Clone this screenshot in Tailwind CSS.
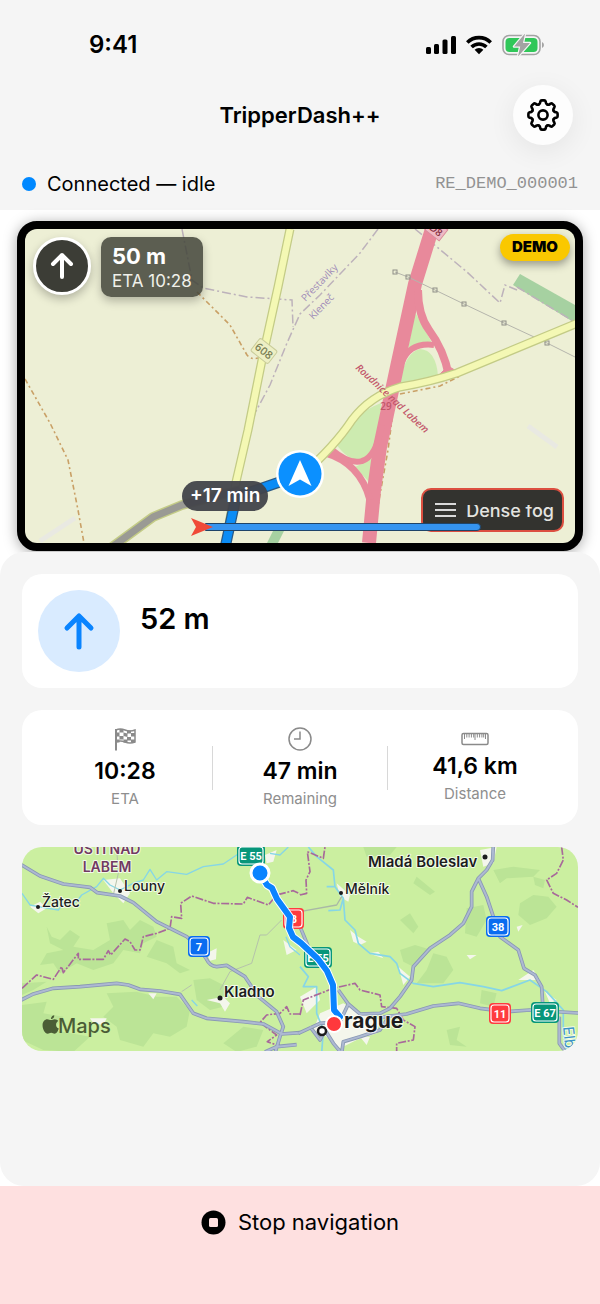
<!DOCTYPE html>
<html lang="en">
<head>
  <meta charset="UTF-8">
  <title>TripperDash++</title>
  <meta name="viewport" content="width=device-width, initial-scale=1.0">
  <script src="https://cdn.jsdelivr.net/npm/@tailwindcss/browser@4"></script>
</head>
<body class="min-h-screen flex flex-col bg-white text-black font-['Inter',sans-serif]">

  <header class="bg-[#f5f5f5]">
    <!-- status bar -->
    <div class="h-[85px] pt-1 pl-[89px] pr-[55px] flex items-center justify-between">
      <span class="text-2xl font-semibold">9:41</span>
      <div class="flex items-center gap-[10px]">
        <svg width="30" height="20" viewBox="0 0 30 20">
          <rect x="0" y="12" width="5" height="7" rx="1.5"/>
          <rect x="8" y="9" width="5" height="10" rx="1.5"/>
          <rect x="16.500" y="4.500" width="5" height="14.500" rx="1.500"/>
          <rect x="25" y="1" width="5" height="18" rx="1.500"/>
        </svg>
        <svg width="26" height="20" viewBox="0 0 26 20">
          <g fill="none" stroke="#000" stroke-width="3.600">
            <path d="M1.300 7.500A16.500 16.500 0 0 1 24.700 7.500"/>
            <path d="M5.600 12A10.500 10.500 0 0 1 20.400 12"/>
          </g>
          <path d="M8.600 14.800A6.300 6.300 0 0 1 17.400 14.800L13 19.300Z"/>
        </svg>
        <svg width="43" height="22" viewBox="0 0 43 22">
          <rect x="1" y="1.500" width="37" height="19" rx="6" fill="none" stroke="#a3a3a3" stroke-width="1.600"/>
          <rect x="3.500" y="4" width="32" height="14" rx="4" fill="#30c759"/>
          <path d="M40 8v6q2-1 2-3t-2-3z" fill="#a3a3a3"/>
          <path d="M23 -0.500L12 12.500H18.200L16 22.500L28 9H21Z" fill="#a3a3a3" stroke="#f5f5f5" stroke-width="2.400" stroke-linejoin="round" paint-order="stroke"/>
        </svg>
      </div>
    </div>

    <!-- title bar -->
    <div class="grid grid-cols-[60px_1fr_60px] items-center px-[27px]">
      <span></span>
      <h1 class="text-center text-[22px] font-semibold">TripperDash++</h1>
      <button type="button" aria-label="Settings" class="size-15 rounded-full bg-[#fdfdfd] flex items-center justify-center shadow-[0_6px_28px_rgba(0,0,0,0.07)]">
        <svg width="34" height="34" viewBox="-17 -17 34 34" fill="none" stroke="#000" stroke-width="2.600" stroke-linecap="round" stroke-linejoin="round">
          <path id="tooth" d="M-4.360 -10.530Q-3.100 -11.100 -2.900 -12.200L-2.700 -13.400Q-2.400 -14.600 -1.200 -14.600H1.200Q2.400 -14.600 2.700 -13.400L2.900 -12.200Q3.100 -11.100 4.360 -10.530"/>
          <use href="#tooth" transform="rotate(45)"/>
          <use href="#tooth" transform="rotate(90)"/>
          <use href="#tooth" transform="rotate(135)"/>
          <use href="#tooth" transform="rotate(180)"/>
          <use href="#tooth" transform="rotate(225)"/>
          <use href="#tooth" transform="rotate(270)"/>
          <use href="#tooth" transform="rotate(315)"/>
          <circle r="4.600"/>
        </svg>
      </button>
    </div>

    <!-- connection -->
    <div class="mt-3 h-[53px] px-[22px] flex items-center justify-between">
      <div class="flex items-center gap-[11px]">
        <span class="size-[14px] rounded-full bg-[#0088ff]"></span>
        <span class="text-[20px]">Connected — idle</span>
      </div>
      <span class="text-[17px] text-[#929292] font-['Liberation_Mono',monospace]">RE_DEMO_000001</span>
    </div>
  </header>

  <!-- dash preview -->
  <section class="px-[17px] pt-[11px] pb-px">
    <div class="relative h-[330px] rounded-[20px] border-8 border-black bg-black shadow-[0_2px_14px_rgba(0,0,0,0.35)]">
      <svg class="w-full h-full rounded-[12px]" viewBox="25 229 550 314" preserveAspectRatio="xMidYMid slice">
        <rect x="-300" y="0" width="1200" height="800" fill="#edefd5"/>
        <!-- meadows and woods -->
        <g fill="#cdebb0">
          <path d="M415 312L432 343Q415 342 407 354Z"/>
          <path d="M399 385Q405 352 420 349Q436 350 438 376Z"/>
          <path d="M336 444Q350 415 381 403Q380 445 367 458Q352 466 336 444Z"/>
          <path d="M355 467L373 458L369 482Z"/>
        </g>
        <path d="M520 274L575 305V323L513 285Z" fill="#a6d1a1"/>
        <path d="M273 531L284 531L278 543H267Z" fill="#a6d1a1"/>
        <path d="M528 426L557 447M40 541L75 518" stroke="#e9e9e2" stroke-width="5" fill="none"/>
        <!-- borders and tracks -->
        <g fill="none" stroke="#bdb2bb" stroke-width="1.500" stroke-dasharray="9 3 2 3">
          <path d="M378 229L360 253L320 295L300 314L287 343L270 385L255 413L240 477"/>
          <path d="M182 229L192 280L203 288L247 297L292 300L293 327"/>
          <path d="M415 229L437 247L467 272L500 303L505 285L517 290"/>
          <path d="M517 287L573 321"/>
        </g>
        <g fill="none" stroke="#c9a066" stroke-width="1.600" stroke-dasharray="5 3 2 3">
          <path d="M197 292L230 325L247 355Q251 360 258 358"/>
          <path d="M25 379L50 423L68 460L78 510L84 543"/>
          <path d="M400 394L440 386L460 376"/>
          <path d="M394 404L388 450L379 500L374 543"/>
        </g>
        <!-- motorway -->
        <g fill="none" stroke="#e8899b">
          <path d="M432 229L415 284L397 367L390 400L380 447L374 490L369 543" stroke-width="14"/>
          <path d="M418 290Q418 315 429 330Q444 350 449 376" stroke-width="8"/>
          <path d="M402 362Q410 342 434 345" stroke-width="6"/>
          <path d="M325 453Q360 463 370 500" stroke-width="7"/>
          <path d="M331 449Q350 465 362 461Q376 457 382 425" stroke-width="6"/>
          <path d="M436 378L448 366L458 372Z" fill="#e8899b"/>
        </g>
        <!-- power line -->
        <path d="M395 272L408 277L435 290L464 304L504 323L547 343L575 357" fill="none" stroke="#b5b5ac" stroke-width="1"/>
        <g fill="none" stroke="#8f8f88" stroke-width="1">
          <rect x="393" y="270" width="4" height="4"/>
          <rect x="406" y="275" width="4" height="4"/>
          <rect x="433" y="288" width="4" height="4"/>
          <rect x="462" y="302" width="4" height="4"/>
          <rect x="502" y="321" width="4" height="4"/>
          <rect x="545" y="341" width="4" height="4"/>
        </g>
        <!-- main roads -->
        <g fill="none" stroke-linejoin="round">
          <g stroke="#c3cb86" stroke-width="9">
            <path id="road608" d="M290 229L278 287L262 360L248 430L236 482L226 543"/>
            <path id="roadEast" d="M580 322L457 373Q430 382 400 387Q370 396 352 420Q335 446 300 477"/>
          </g>
          <g stroke="#f4f8b4" stroke-width="6.500">
            <use href="#road608"/>
            <use href="#roadEast"/>
          </g>
          <path d="M112 547L153 517L182 505L240 490" stroke="#c3cb86" stroke-width="10"/>
          <path d="M112 547L153 517L182 505L240 490" stroke="#9a9a94" stroke-width="7"/>
          <path d="M300 475L236 497L225 548" stroke="#2a5a86" stroke-width="11"/>
          <path d="M300 475L236 497L225 548" stroke="#0b8cf5" stroke-width="8.500"/>
        </g>
        <!-- labels -->
        <g font-family="Open Sans, sans-serif" text-anchor="middle">
          <g transform="translate(264 351) rotate(38)">
            <rect x="-11" y="-8" width="22" height="16" rx="2" fill="#edefc4" stroke="#c9cc9a"/>
            <text y="4" font-size="11" font-weight="600" fill="#7b7f55">608</text>
          </g>
          <text transform="translate(322 285) rotate(-46)" font-size="10" fill="#a08bb8">Přestavlky</text>
          <text transform="translate(324 309) rotate(-46)" font-size="10" fill="#a08bb8">Kleneč</text>
          <text transform="translate(390 401) rotate(43)" font-size="10" font-style="italic" font-weight="600" fill="#c2576a">Roudnice nad Labem</text>
          <text x="386" y="410" font-size="10" font-weight="600" fill="#c2576a">29</text>
          <g transform="translate(437 229) rotate(38)">
            <rect x="-9" y="-6" width="18" height="14" fill="#efb9c4" stroke="#d98b9b"/>
            <text y="5" font-size="10" font-weight="600" fill="#8a3346">D8</text>
          </g>
        </g>
      </svg>

      <div class="absolute top-2 left-2 flex items-start gap-[10px]">
        <div class="size-[58px] rounded-full border-[3px] border-white bg-[#3c3d36] flex items-center justify-center shadow-[0_4px_10px_rgba(0,0,0,0.25)]">
          <svg width="24" height="28" viewBox="0 0 24 28" fill="none" stroke="#fff" stroke-width="4" stroke-linecap="round" stroke-linejoin="round"><path d="M12 25V3M3 12L12 3L21 12"/></svg>
        </div>
        <div class="h-[60px] px-[11px] pt-1 rounded-[10px] bg-[#42443a]/85 text-white shadow-[0_4px_10px_rgba(0,0,0,0.25)]">
          <p class="text-[22px] leading-[30px] font-bold">50 m</p>
          <p class="text-[17px] leading-[20px] text-[#f0f0ea]">ETA 10:28</p>
        </div>
      </div>

      <span class="absolute top-[5px] right-[5px] h-[27px] px-3 rounded-full bg-[#fac800] flex items-center text-[15px] font-black shadow-[0_4px_8px_rgba(0,0,0,0.35)]">DEMO</span>

      <div class="absolute bottom-[45px] left-1/2 -translate-x-1/2">
        <svg width="48" height="48" viewBox="-24 -24 48 48">
          <circle r="24" fill="#fff"/>
          <circle r="21.500" fill="#0b90ff"/>
          <path d="M0 -14L11.500 12L0 5.500L-11.500 12Z" fill="#fff"/>
        </svg>
      </div>

      <span class="absolute bottom-8 left-[157px] h-[30px] px-2 rounded-full bg-[#42434a]/95 text-white flex items-center text-[19px] font-semibold">+17 min</span>

      <div class="absolute bottom-[11px] right-[11px] h-[44px] px-2 pl-3 rounded-[10px] border-2 border-[#dc4f40] bg-[#33332f] flex items-center gap-[10px] text-[#e4e4e0]">
        <svg width="21" height="14" viewBox="0 0 21 14" stroke="#dadada" stroke-width="2"><path d="M0 1H21M0 7H21M0 13H21"/></svg>
        <span class="text-[18px] font-medium">Dense fog</span>
        <span class="absolute top-[11px] right-2 h-1 w-[90px] bg-[#33332f]"></span>
      </div>

      <div class="absolute bottom-[7px] left-[166px] right-[94px] flex items-center">
        <div class="ml-[14px] my-[5px] flex-1 h-2 rounded-r-full border border-[#1f4468] bg-[#3594f0]"></div>
        <svg class="absolute left-0" width="22" height="18" viewBox="0 0 22 18"><path d="M0 0L22 9L0 18L5 9Z" fill="#f04a38"/></svg>
      </div>
    </div>
  </section>

  <main class="relative flex-1 bg-[#f5f5f5] rounded-[24px] px-[22px] pt-[22px] flex flex-col gap-[22px]">
    <!-- next manoeuvre -->
    <section class="bg-white rounded-[20px] p-4 flex items-center gap-5">
      <div class="size-[82px] rounded-full bg-[#d9ebff] flex items-center justify-center">
        <svg width="32" height="38" viewBox="0 0 32 38" fill="none" stroke="#0a84ff" stroke-width="5" stroke-linecap="round" stroke-linejoin="round"><path d="M16 35V4M4 16L16 4L28 16"/></svg>
      </div>
      <div>
        <p class="text-[29px] leading-[36px] font-semibold">52 m</p>
        <p class="h-6"></p>
      </div>
    </section>

    <!-- trip stats -->
    <section class="bg-white rounded-[20px] h-[115px] px-4 flex items-center text-center">
      <div class="flex-1 flex flex-col items-center">
        <svg width="24" height="24" viewBox="0 0 24 24" fill="none" stroke="#8a8a8a" stroke-width="1.500">
          <path d="M3 23.500V2" stroke-width="2"/>
          <path d="M3 3Q7 1 12 3T22 3V15Q17 17 12 15T3 15Z"/>
          <g fill="#8a8a8a" stroke="none">
            <path d="M6.500 2h4v3.500h-4zM14 3.500h4v3h-4zM10.500 5.500l4 1v3.500l-4-1zM18 6h4v3.500h-4zM3 5.500h3.500v4H3zM6.500 9h4v3.500h-4zM14 10h4v3.500h-4zM10.500 12.500h4v3h-4zM18 12.500h4v3h-4zM3 12.500h3.500v3H3z"/>
          </g>
        </svg>
        <p class="mt-[6px] text-[23px] leading-[28px] font-semibold">10:28</p>
        <p class="mt-1 text-[15px] leading-[20px] text-[#8e8e8e]">ETA</p>
      </div>
      <span class="w-px h-[44px] bg-[#d8d8d8]"></span>
      <div class="flex-1 flex flex-col items-center">
        <svg width="24" height="24" viewBox="0 0 24 24" fill="none" stroke="#8a8a8a" stroke-width="1.500"><circle cx="12" cy="12" r="11"/><path d="M12 4.500V12H6"/></svg>
        <p class="mt-[6px] text-[23px] leading-[28px] font-semibold">47 min</p>
        <p class="mt-1 text-[15px] leading-[20px] text-[#8e8e8e]">Remaining</p>
      </div>
      <span class="w-px h-[44px] bg-[#d8d8d8]"></span>
      <div class="flex-1 flex flex-col items-center">
        <svg width="28" height="14" viewBox="0 0 28 14" fill="none" stroke="#8a8a8a"><rect x="1" y="1.500" width="26" height="11" rx="1.500" stroke-width="1.500"/><path d="M3.500 2v5M5.800 2v3.500M8.100 2v3.500M10.400 2v3.500M12.700 2v3.500M14 2v6M16.300 2v3.500M18.600 2v3.500M20.900 2v3.500M22.700 2v3.500M24.500 2v5"/></svg>
        <p class="mt-[6px] text-[23px] leading-[28px] font-semibold">41,6 km</p>
        <p class="mt-1 text-[15px] leading-[20px] text-[#8e8e8e]">Distance</p>
      </div>
    </section>

    <!-- route overview -->
    <section class="h-[204px] rounded-[20px] overflow-hidden">
      <svg class="w-full h-full" viewBox="0 0 556 204" preserveAspectRatio="xMidYMid slice">
        <rect x="-300" y="-100" width="1200" height="500" fill="#cbefa0"/>
        <!-- west half -->
        <g transform="translate(-12 -7) scale(.3333)" fill="none" stroke-linejoin="round">
          <g fill="#bbe496">
            <path d="M110 260L125 290L150 300L180 270L210 290L190 320L250 330L300 300L290 250L340 240L360 270L390 240L430 260L440 290L400 310L390 340L340 330L310 370L250 390L200 370L150 400L130 370L90 375L110 340L160 330L120 310Z"/>
            <path d="M440 300L490 320L500 370L540 390L510 400L470 370L410 350Z"/>
            <path d="M290 460L380 455L440 470L500 470L540 510L530 560L480 590L430 580L400 620L330 600L320 560L280 530L310 500Z"/>
            <path d="M550 420L600 415L650 440L640 500L600 510L560 480Z"/>
            <path d="M36 495L110 485L100 520L160 530L130 570L240 590L190 636L100 630L36 600Z"/>
            <path d="M640 610L700 560L760 570L740 620L680 636Z"/>
            <path d="M36 430L110 425L70 450L36 465Z"/>
          </g>
          <g fill="#f4f6ec">
            <path d="M60 200L90 185L110 205L85 220Z"/>
            <path d="M280 120L330 115L360 160L340 190L310 160Z"/>
            <path d="M590 340L620 325L618 358L600 362Z"/>
            <path d="M590 480L640 470L660 490L645 515L630 490Z"/>
            <path d="M765 45L800 30L790 65L770 70Z"/>
            <path d="M415 460L440 460L430 478Z"/>
            <path d="M820 300L860 330L830 345Z"/>
            <path d="M240 535L290 535L280 555L250 550Z"/>
          </g>
          <path d="M36 160L60 195L85 200L145 210L160 190L200 185L215 165L260 140L280 115L300 135L330 150L370 130L400 120L420 88L440 120L470 95L530 103L580 80L640 72L680 45L720 30L740 15" stroke="#86d6e6" stroke-width="4"/>
          <path d="M780 40L810 45L835 21M828 290L840 320L870 345M545 480L562 498" stroke="#86d6e6" stroke-width="4"/>
          <path d="M320 25L325 100L310 165M815 240L770 285L750 285L725 370L660 395L630 450M545 435L515 455" stroke="#b5c2ab" stroke-width="3"/>
          <path d="M36 445L80 405L130 418L155 380L160 398L205 340L205 358L280 358L295 332L302 345L345 297L360 305L375 330L390 330L400 290L440 280L480 265L485 230L515 235L512 190L545 168L610 190L700 192L712 172L775 195L800 165L850 152L870 162" stroke="#a8699a" stroke-width="5" stroke-dasharray="24 5 6 5"/>
          <path d="M795 636L800 615L772 605L800 585L750 548L770 525L810 520L830 500L840 522L870 522" stroke="#a8699a" stroke-width="5" stroke-dasharray="24 5 6 5"/>
          <g stroke="#8998b4" stroke-width="11">
            <path id="west" d="M30 72L90 108L160 132L240 142L262 158L330 168L370 188L440 245L530 290L560 315L588 355Q600 380 620 380L650 376L705 410L745 470L800 515L820 560L810 590L795 640M30 482L70 462L130 445L210 440L320 430L355 435L390 448L450 453L510 463L550 520L590 535L700 545L760 552L815 582L870 578M765 636L800 620L860 614"/>
          </g>
          <use href="#west" stroke="#adb9d2" stroke-width="6"/>
        </g>
        <!-- east half -->
        <g transform="translate(278 -7) scale(.3333)" fill="none" stroke-linejoin="round">
          <g fill="#bbe496">
            <path d="M660 190L700 165L745 170L770 200L740 235L690 255L655 225Z"/>
            <path d="M500 205L550 195L560 240L530 290L495 280Z"/>
            <path d="M300 330L345 315L395 330L340 380L310 365Z"/>
            <path d="M380 390L400 340L440 350L460 390L430 430L350 430Z"/>
            <path d="M545 450L590 460L580 500L540 490Z"/>
            <path d="M300 240L330 220L355 260L340 280Z"/>
            <path d="M580 90L640 80L720 90L700 110L620 115L600 130Z"/>
            <path d="M350 110L405 155L390 165L340 130Z"/>
            <path d="M190 21L290 21L270 45L200 50Z"/>
            <path d="M440 570L480 560L470 600L500 620L450 615Z"/>
            <path d="M700 110L735 120L730 145L705 135Z"/>
          </g>
          <g fill="#f4f6ec">
            <path d="M60 520L130 490L180 520L240 540L230 580L170 600L120 625L80 590L40 570Z"/>
            <path d="M110 130L150 165L145 185L120 170Z"/>
            <path d="M150 270L175 290L200 305L180 315L160 305Z"/>
            <path d="M205 340L235 335L250 355Z"/>
            <path d="M295 380L330 410L310 435Z"/>
            <path d="M655 420L700 390L720 420Z"/>
            <path d="M500 345L530 345L510 358Z"/>
            <path d="M540 30L590 21L580 70L550 80Z"/>
            <path d="M650 260L668 255L655 275Z"/>
            <path d="M735 455L770 480L750 490Z"/>
            <path d="M0 470L50 440L60 480L20 520Z"/>
            <path d="M180 590L210 590L200 615Z"/>
          </g>
          <path d="M25 21L50 50L100 90L105 140L80 140M105 140L130 175L120 210L85 212M130 175L135 240L165 270L175 310L210 340L270 350L290 370L300 400L340 430L400 440L480 428L550 440L605 452L690 420L740 455L790 510L790 570L800 636" stroke="#86d6e6" stroke-width="5"/>
          <path d="M0 380L25 410L10 440L50 440L50 520L70 570L65 640" stroke="#86d6e6" stroke-width="5"/>
          <path d="M0 215L110 195L125 170" stroke="#a9b8a6" stroke-width="4"/>
          <path d="M0 525L10 480L100 445L165 430L180 450L240 465L245 500L290 505L310 540L345 560L340 600L290 610L290 640M0 165L20 160L18 120L30 95L22 35L70 55L75 21M785 21L790 60L770 100L740 120L760 160L800 180L834 202" stroke="#a8699a" stroke-width="5" stroke-dasharray="24 5 6 5"/>
          <g stroke="#8998b4" stroke-width="11">
            <path id="east" d="M580 15L578 60L560 90L535 115L515 155L515 200L490 250L450 285L390 325L340 380L335 420L300 470L270 505L240 520L180 522L145 492L115 450M535 115L560 170L600 290L655 330L672 385L705 405L725 440L728 490M240 532L320 522L400 498L475 490L540 505L620 515L690 510L850 520M778 530L778 610L800 640M-5 580L60 550L120 545L145 492M30 560L60 600L75 570L100 610L125 640L130 605L180 590L240 570L260 540M0 260L25 320L30 360"/>
          </g>
          <use href="#east" stroke="#adb9d2" stroke-width="6"/>
        </g>

        <!-- road shields -->
        <g font-family="Roboto, sans-serif" font-size="11" font-weight="700" fill="#fff" text-anchor="middle" stroke-width="1.200">
          <rect x="215" y="-2" width="28" height="21" rx="4" fill="#07967a"/>
          <rect x="217" y="0" width="24" height="17" rx="3" fill="none" stroke="#fff"/>
          <text x="229" y="13">E 55</text>
          <rect x="166" y="89" width="22" height="21" rx="4" fill="#0a6cf0"/>
          <rect x="168" y="91" width="18" height="17" rx="3" fill="none" stroke="#fff"/>
          <text x="177" y="104">7</text>
          <rect x="464" y="69" width="24" height="21" rx="4" fill="#0a6cf0"/>
          <rect x="466" y="71" width="20" height="17" rx="3" fill="none" stroke="#fff"/>
          <text x="476" y="84">38</text>
          <rect x="467" y="156" width="22" height="21" rx="4" fill="#ff3b3f"/>
          <rect x="469" y="158" width="18" height="17" rx="3" fill="none" stroke="#fff"/>
          <text x="478" y="171">11</text>
          <rect x="509" y="155" width="28" height="21" rx="4" fill="#07967a"/>
          <rect x="511" y="157" width="24" height="17" rx="3" fill="none" stroke="#fff"/>
          <text x="523" y="170">E 67</text>
          <rect x="261" y="61" width="21" height="21" rx="4" fill="#ff3b3f"/>
          <rect x="263" y="63" width="17" height="17" rx="3" fill="none" stroke="#fff"/>
          <text x="272" y="76">8</text>
          <rect x="282" y="100" width="28" height="21" rx="4" fill="#07967a"/>
          <rect x="284" y="102" width="24" height="17" rx="3" fill="none" stroke="#fff"/>
          <text x="296" y="115">E 55</text>
        </g>

        <!-- places -->
        <g font-family="Inter, sans-serif" fill="#1c1c1e" stroke="#fff" stroke-opacity=".75" stroke-width="2" paint-order="stroke" stroke-linejoin="round">
          <g font-size="14" font-weight="600" fill="#713a62" text-anchor="middle">
            <text x="85" y="7">ÚSTÍ NAD</text>
            <text x="85" y="25">LABEM</text>
          </g>
          <g font-size="14" font-weight="500">
            <text x="102" y="44">Louny</text>
            <text x="20" y="60">Žatec</text>
            <text x="323" y="47">Mělník</text>
          </g>
          <g font-size="15" font-weight="600">
            <text x="346" y="20">Mladá Boleslav</text>
            <text x="202" y="150">Kladno</text>
          </g>
          <text x="322" y="181" font-size="21" font-weight="700">rague</text>
          <text transform="translate(541 180) rotate(84)" font-size="15" fill="#3b93c6">Elb</text>
        </g>
        <g fill="#1c1c1e">
          <circle cx="98" cy="44" r="2"/>
          <circle cx="16" cy="60" r="2"/>
          <circle cx="319" cy="46" r="2"/>
          <circle cx="463" cy="10" r="2.500"/>
          <circle cx="198" cy="151" r="2.500"/>
        </g>
        <circle cx="300" cy="184" r="4" fill="#fff" stroke="#1c1c1e" stroke-width="2.500"/>

        <!-- route -->
        <g fill="none" stroke-linejoin="round" stroke-linecap="round">
          <path d="M238 26L245 38L250 41L255 52L268 70L267 81L271 90L279 96L296 112L305 124L311 138L312 163L318 170" stroke="#fff" stroke-width="8"/>
          <path d="M238 26L245 38L250 41L255 52L268 70L267 81L271 90L279 96L296 112L305 124L311 138L312 163L318 170" stroke="#0a84ff" stroke-width="6"/>
        </g>
        <circle cx="238" cy="26" r="9" fill="#0a84ff" stroke="#fff" stroke-width="3"/>
        <circle cx="312" cy="177" r="8" fill="#ff383c" stroke="#fff" stroke-width="2"/>

        <!-- attribution -->
        <g fill="#4b5d36">
          <path d="M30 174.500C31.500 174.500 32.500 173.200 32.400 171.500C31 171.700 29.600 172.900 29.600 174.500ZM26.500 174.800C28 174.800 28.500 175.500 29.600 175.500S31.500 174.700 32.800 174.700C34 174.700 35.200 175.300 35.800 176.300C33 178 33.500 181.500 36.300 182.600C35.700 184.500 34.300 187 32.700 187C31.500 187 31.200 186.300 29.800 186.300S28 187 26.900 187C24.500 187 22.500 183 22.500 179.800C22.500 176.700 24.500 174.800 26.500 174.800Z" transform="translate(-6 -34) scale(1.180)"/>
          <text x="36" y="186" font-family="Inter, sans-serif" font-size="20" font-weight="500">Maps</text>
        </g>
      </svg>
    </section>
  </main>

  <footer class="bg-[#fee0e0] pb-[46px]">
    <button type="button" class="w-full h-[72px] flex items-center justify-center gap-3 text-[22px]">
      <svg width="25" height="25" viewBox="0 0 25 25"><circle cx="12.500" cy="12.500" r="12"/><rect x="8" y="8" width="9" height="9" rx="1.500" fill="#fee0e0"/></svg>
      Stop navigation
    </button>
  </footer>

</body>
</html>
